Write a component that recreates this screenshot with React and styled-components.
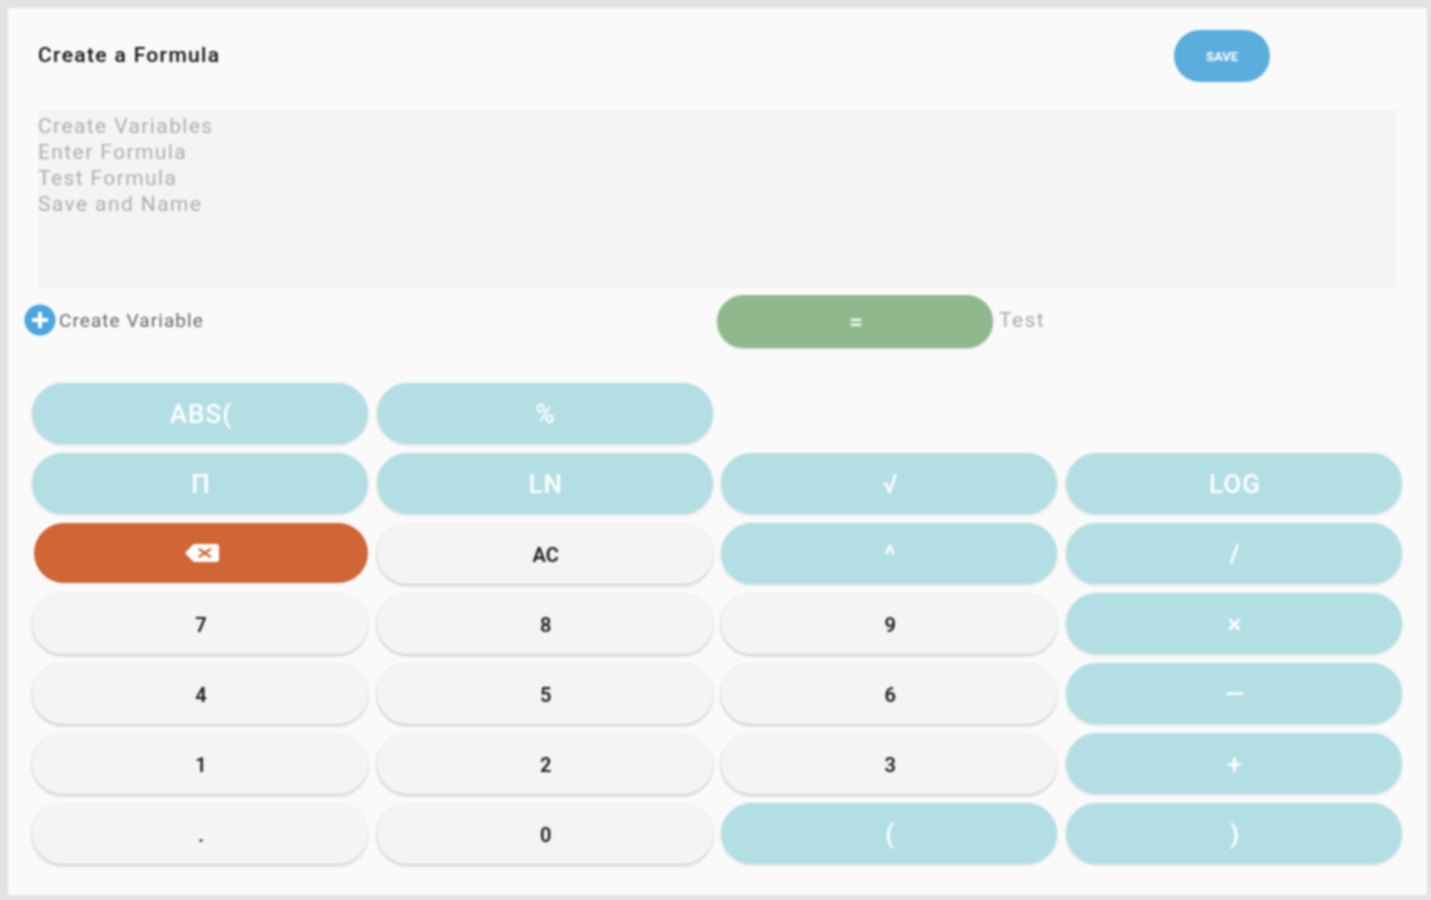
import React from "react";
import styled, { createGlobalStyle } from "styled-components";

const Global = createGlobalStyle`
    html, body {
        margin: 0;
        height: 100%;
        background: #e3e3e3;
        font-family: Roboto, "Liberation Sans", sans-serif;
    }
`

const Page = styled.div`
    height: 900px;
    padding: 8px 4px 5px 8px;
    box-sizing: border-box;
    overflow: hidden;
`

const Panel = styled.main`
    height: 887px;
    background: #fafafa;
    display: flex;
    flex-direction: column;
    filter: blur(1px);
`

const TopBar = styled.header`
    height: 102px;
    display: flex;
    align-items: center;
    justify-content: space-between;
    padding: 0 157px 8px 30px;
    box-sizing: border-box;
`

const Title = styled.h1`
    margin: 0;
    font-size: 21px;
    font-weight: 500;
    letter-spacing: 1.35px;
    color: #111;
`

const SaveButton = styled.button`
    width: 96px;
    height: 52px;
    margin-top: 2px;
    padding: 0;
    border: 0;
    border-radius: 26px;
    background: #5aaddd;
    color: #fff;
    font: 700 13px Roboto, sans-serif;
    text-transform: uppercase;
`

const Instructions = styled.div`
    margin: 0 31px 0 30px;
    height: 178px;
    padding: 3px 0 0;
    box-sizing: border-box;
    background: #f4f4f4;
    color: #adadad;
    font-size: 21px;
    line-height: 26px;
    letter-spacing: 1.4px;
`

const ActionRow = styled.div`
    height: 53px;
    margin-top: 7px;
    display: flex;
    align-items: center;
    padding-left: 16px;
`

const AddVariable = styled.div`
    width: 693px;
    margin-top: -3px;
    display: flex;
    align-items: center;
    gap: 3px;
    font-size: 19px;
    letter-spacing: 1.07px;
    color: #666;
`

const EqualsButton = styled.button`
    width: 276px;
    height: 53px;
    padding: 0 0 0 2px;
    border: 0;
    border-radius: 27px;
    background: #8fb98d;
    color: #fff;
    font: 500 24px Roboto, sans-serif;
    box-shadow: 0 1px 2px rgba(0, 0, 0, 0.15);
`

const TestLabel = styled.span`
    margin: -3px 0 0 6px;
    font-size: 21px;
    color: #aaa;
    letter-spacing: 1.4px;
`

const Keypad = styled.div`
    margin: 35px 25px 0 24px;
    display: grid;
    grid-template-columns: repeat(4, 336px);
    grid-auto-rows: 61px;
    column-gap: 8.67px;
    row-gap: 9px;
`

const keyColors = {
    op: "#b3dfe4",
    num: "#f4f4f4",
    del: "#d06536"
}

const Key = styled.button`
    border: 0;
    padding: ${p => (p.$kind === "num" ? "3px 0 0 2px" : "0 0 0 2px")};
    border-radius: 31px;
    display: flex;
    align-items: center;
    justify-content: center;
    background: ${p => keyColors[p.$kind]};
    color: ${p => (p.$kind === "num" ? "#1a1a1a" : "#fff")};
    font-family: Roboto, sans-serif;
    font-size: ${p => (p.$kind === "num" ? "20px" : "26px")};
    font-weight: ${p => (p.$kind === "num" ? 600 : 500)};
    letter-spacing: ${p => (p.$kind === "num" ? "0" : "1px")};
    box-shadow: ${p => (p.$kind === "num"
        ? "0 2px 3px rgba(0, 0, 0, 0.18), -1px 0 2px rgba(0, 0, 0, 0.05)"
        : "0 1px 3px rgba(0, 0, 0, 0.14)")};
    ${p => p.$kind === "del" && "margin: 0 0 1px 2px; box-shadow: none;"}
`

const Spacer = styled.div`
    grid-column: span 2;
`

const rows = [
    [["ABS(", "op"], ["%", "op"]],
    [["Π", "op"], ["LN", "op"], ["√", "op"], ["LOG", "op"]],
    [["del", "del"], ["AC", "num"], ["^", "op"], ["/", "op"]],
    [["7", "num"], ["8", "num"], ["9", "num"], ["×", "op"]],
    [["4", "num"], ["5", "num"], ["6", "num"], ["—", "op"]],
    [["1", "num"], ["2", "num"], ["3", "num"], ["+", "op"]],
    [[".", "num"], ["0", "num"], ["(", "op"], [")", "op"]]
]

const PlusIcon = () => (
    <svg width="32" height="32" viewBox="0 0 32 32">
        <circle cx="16" cy="16" r="15.5" fill="#4ba6e0" />
        <path d="M16 8v16M8 16h16" stroke="#fff" strokeWidth="4" />
    </svg>
)

const BackspaceIcon = () => (
    <svg width="34" height="24" viewBox="0 0 24 24" preserveAspectRatio="none">
        <path fill="#fff" d="M22 3H7c-.69 0-1.23.35-1.59.88L0 12l5.41 8.11c.36.53.9.89 1.59.89h15c1.1 0 2-.9 2-2V5c0-1.1-.9-2-2-2zm-3 12.59L17.59 17 14 13.41 10.41 17 9 15.59 12.59 12 9 8.41 10.41 7 14 10.59 17.59 7 19 8.41 15.41 12 19 15.59z" />
    </svg>
)

export default function App() {
    return (
        <Page>
            <Global />
            <Panel>
                <TopBar>
                    <Title>Create a Formula</Title>
                    <SaveButton>Save</SaveButton>
                </TopBar>
                <Instructions>
                    Create Variables<br />
                    Enter Formula<br />
                    Test Formula<br />
                    Save and Name
                </Instructions>
                <ActionRow>
                    <AddVariable>
                        <PlusIcon />
                        Create Variable
                    </AddVariable>
                    <EqualsButton>=</EqualsButton>
                    <TestLabel>Test</TestLabel>
                </ActionRow>
                <Keypad>
                    {rows.map((row, i) => (
                        <React.Fragment key={i}>
                            {row.map(([label, kind]) => (
                                <Key key={label} $kind={kind}>
                                    {kind === "del" ? <BackspaceIcon /> : label}
                                </Key>
                            ))}
                            {row.length === 2 && <Spacer />}
                        </React.Fragment>
                    ))}
                </Keypad>
            </Panel>
        </Page>
    )
}
